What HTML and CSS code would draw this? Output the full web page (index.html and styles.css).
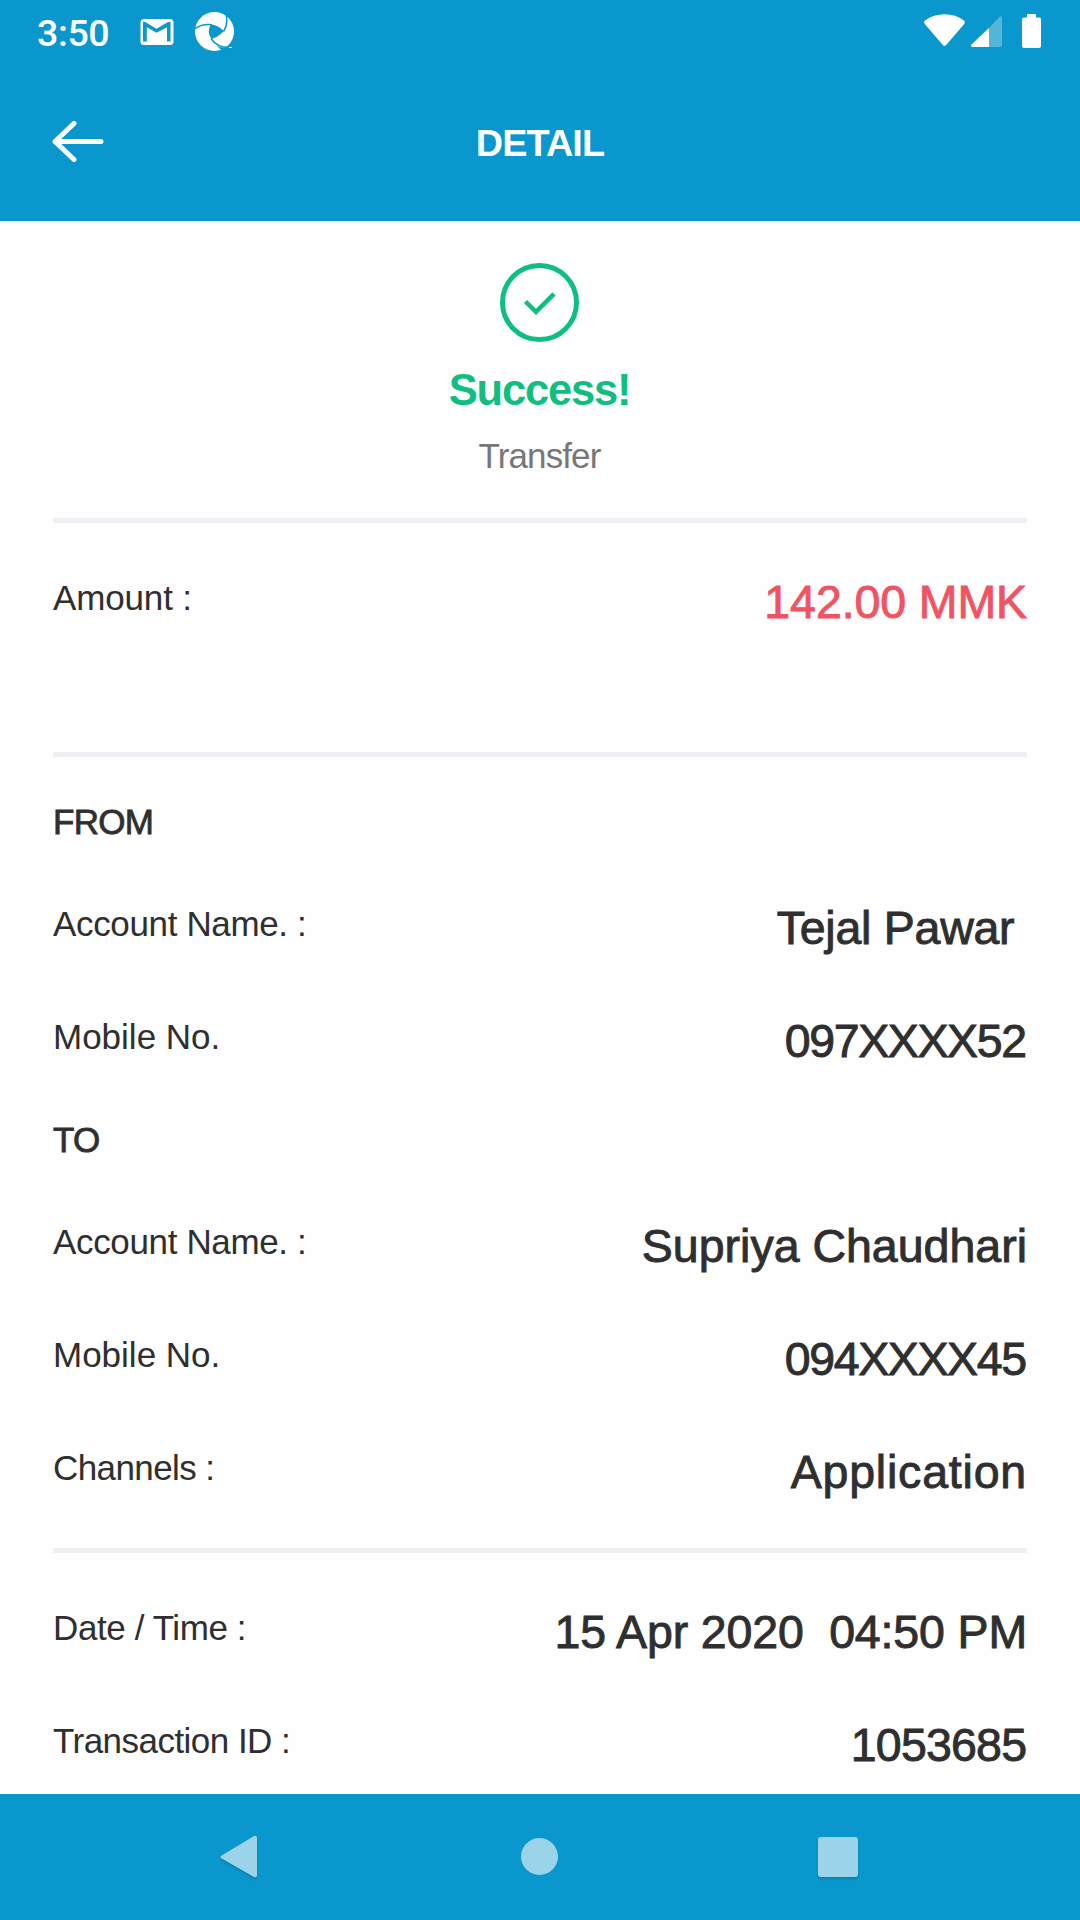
FILE: index.html
```html
<!DOCTYPE html>
<html lang="en">
<head>
<meta charset="utf-8">
<title>Detail</title>
<link rel="stylesheet" href="styles.css">
</head>
<body>
<div class="screen">
  <header class="top">
    <div class="status">
      <span class="clock">3:50</span>
      <svg class="mail" width="34" height="26" viewBox="0 0 34 26"><rect x=".5" width="33" height="26" rx="3.5" fill="#fff"/><path d="M3 22.500V3H5.200L16.500 9.800 28 3H30.500V22.500H27V8.300L16.500 13.800 6.800 8.300V22.500Z" fill="#0997cd"/></svg>
      <svg class="wheel" width="40" height="40" viewBox="0 0 40 40"><circle cx="19.500" cy="19.500" r="19.500" fill="#fff"/><path d="M15.700 12.500Q23.500 13 28.700 19.300 22 26 16.300 27 11.500 20 15.700 12.500Z" fill="#0997cd"/><path d="M-.5 17Q7 11.500 17 12.800M31 2.500Q33.500 12 28.500 19.500M16 26.500Q22 35.500 34 35.500" fill="none" stroke="#0997cd" stroke-width="1.500"/><path d="M22 34Q28 37 36 34.500L35 40H25.500L26.500 38Q24 36.500 22 34Z" fill="#0997cd"/><path d="M34 35.500H37" stroke="#fff"/></svg>
      <svg class="signals" width="118" height="36" viewBox="0 0 118 36"><path d="M2 6.500C13-1.800 30-1.800 41 6.500Q42.500 8 41.200 10L23.200 31Q21.500 32.800 19.800 31L1.800 10Q.5 8 2 6.500Z" fill="#fff"/><path d="M66 14 76 3.500Q79 1 79 4V31Q79 33 77 33H66Z" fill="#54b5da"/><path d="M66 14V33H50Q47 33 48.500 30.500Z" fill="#fff"/><path d="M104 0H113V3.500H116Q118 3.500 118 5.500V32Q118 34 116 34H101Q99 34 99 32V5.500Q99 3.500 101 3.500H104Z" fill="#fff"/></svg>
    </div>
    <div class="bar">
      <svg class="back" width="52" height="41" viewBox="0 0 52 41"><path d="M22 2.500 3 20.500 22 38.500M3 20.500H49" fill="none" stroke="#fff" stroke-width="5" stroke-linecap="round" stroke-linejoin="round"/></svg>
      <h1 class="title">DETAIL</h1>
    </div>
  </header>

  <main class="content">
    <section class="result">
      <svg class="check" width="79" height="79" viewBox="0 0 79 79" fill="none" stroke="#10bf7f"><circle cx="39.500" cy="39.500" r="37" stroke-width="5"/><path d="M25.500 38.500 36 48.800 54 30.800" stroke-width="4.500"/></svg>
      <p class="success">Success!</p>
      <p class="kind">Transfer</p>
    </section>
    <section class="group amount">
      <div class="row"><span class="label">Amount :</span><span class="value red">142.00 MMK</span></div>
    </section>
    <section class="group parties">
      <h2 class="head">FROM</h2>
      <div class="row"><span class="label name">Account Name. :</span><span class="value trailing">Tejal Pawar </span></div>
      <div class="row"><span class="label mobile">Mobile No.</span><span class="value phone">097XXXX52</span></div>
      <h2 class="head to">TO</h2>
      <div class="row"><span class="label name">Account Name. :</span><span class="value person">Supriya Chaudhari</span></div>
      <div class="row"><span class="label mobile">Mobile No.</span><span class="value phone">094XXXX45</span></div>
      <div class="row"><span class="label channels">Channels :</span><span class="value app">Application</span></div>
    </section>
    <section class="group meta">
      <div class="row"><span class="label date">Date / Time :</span><span class="value when">15 Apr 2020  04:50 PM</span></div>
      <div class="row"><span class="label txn">Transaction ID :</span><span class="value id">1053685</span></div>
    </section>
  </main>

  <nav class="nav">
    <svg width="50" height="50" viewBox="0 0 50 50"><path d="M7.500 23 39 4Q42 3 42 6V43Q42 46 39 45L7.500 27Q3.500 25 7.500 23Z"/></svg>
    <svg class="flat" width="50" height="50" viewBox="0 0 50 50"><circle cx="25.500" cy="24.500" r="18.500"/></svg>
    <svg width="50" height="50" viewBox="0 0 50 50"><rect x="5" y="5" width="40" height="40" rx="3"/></svg>
  </nav>
</div>
</body>
</html>
```
FILE: styles.css
```css
* { box-sizing: border-box; margin: 0; padding: 0; }
body { width: 1080px; height: 1920px; overflow: hidden; background: #fefefe; font-family: "Liberation Sans", Arial, sans-serif; color: #2f2f2f; }
svg { display: block; flex: none; }
.screen { height: 1920px; display: flex; flex-direction: column; }

.top { height: 221px; flex: none; background: #0997cd; color: #fff; }
.status { height: 63px; display: flex; align-items: flex-start; padding: 0 39px 0 37px; }
.clock { width: 103px; font: 500 37.5px/44px Roboto, sans-serif; letter-spacing: -.4px; padding-top: 11px; }
.mail { margin-top: 19px; }
.wheel { margin: 12px 0 0 21px; }
.signals { margin: 14px 0 0 auto; }
.bar { height: 158px; display: grid; grid-template-columns: 152px 1fr 152px; align-items: start; }
.back { margin: 58px 0 0 52px; }
.title { margin-top: 58px; text-align: center; font-size: 37.8px; line-height: 44px; letter-spacing: -.9px; }

.content { height: 1573px; flex: none; padding: 0 53px; }
.result { height: 297px; display: flex; flex-direction: column; align-items: center; padding: 42px 1px 0 0; }
.success { margin-top: 23px; font-size: 43.5px; line-height: 50px; font-weight: 700; letter-spacing: -1.2px; color: #10bf7f; }
.kind { margin-top: 21px; font-size: 35px; line-height: 40px; letter-spacing: -.9px; color: #777; }

.group { border-top: 5px solid #efeff4; }
.amount { height: 234px; padding-top: 52px; }
.parties { height: 796px; padding-top: 45px; }
.meta { padding-top: 52px; }
.row { height: 54px; display: flex; justify-content: space-between; margin-bottom: 59px; }
.label { padding-top: 3px; font-size: 35px; line-height: 40px; letter-spacing: -.15px; white-space: nowrap; }
.name { letter-spacing: -.35px; }
.mobile { letter-spacing: 0; }
.channels { letter-spacing: -.6px; }
.date { letter-spacing: -.4px; }
.txn { letter-spacing: -.53px; }
.value { font-size: 46.5px; line-height: 54px; white-space: pre; -webkit-text-stroke: .9px currentColor; }
.red { color: #f05463; letter-spacing: -.1px; }
.trailing { letter-spacing: -.25px; }
.phone { letter-spacing: -1.4px; padding-right: 1.4px; }
.app { letter-spacing: .8px; }
.when { letter-spacing: -.15px; }
.id { letter-spacing: -.8px; padding-right: .8px; }
.head { height: 40px; margin: 0 0 59px; font-size: 35px; line-height: 40px; letter-spacing: -.7px; font-weight: 400; -webkit-text-stroke: .8px currentColor; }
.to { margin-top: -7px; }

.nav { height: 126px; flex: none; background: #0997cd; fill: #9bd4e9; display: flex; justify-content: space-between; padding: 38px 217px 0 215px; }
.nav svg { filter: drop-shadow(0 2px 1px rgba(0, 0, 0, .15)); }
.nav .flat { filter: none; }
```
